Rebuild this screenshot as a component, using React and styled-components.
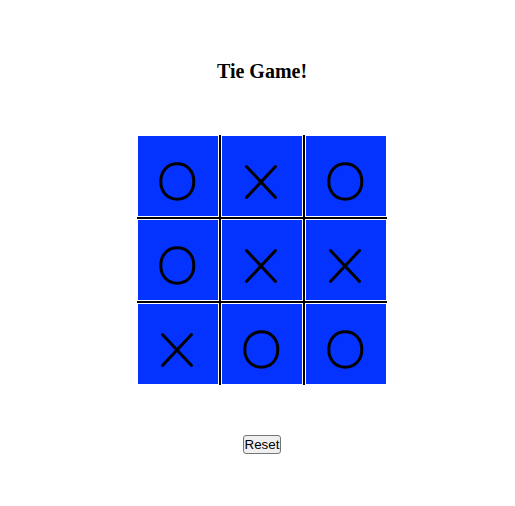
import React from "react";
import styled, { createGlobalStyle } from "styled-components";

const GlobalStyle = createGlobalStyle`
  body {
    margin: 0;
    background: #ffffff;
  }
`

const Page = styled.div`
  display: flex;
  flex-direction: column;
  align-items: center;
  padding-left: 9px;
`
const Title = styled.h1`
  margin: 60px 0 0;
  font-family: "Liberation Serif", "Times New Roman", serif;
  font-size: 20px;
  line-height: 23px;
  font-weight: bold;
  color: #000000;
`
const Board = styled.div`
  display: grid;
  grid-template-columns: repeat(3, 82px);
  grid-template-rows: repeat(3, 82px);
  gap: 2px;
  margin-top: 52px;
  background: #000000;
`
const Cell = styled.div`
  display: flex;
  border: 1px solid #ffffff;
  background: #0433ff;
`
const ResetButton = styled.button`
  margin-top: 50px;
  padding: 1px 1px;
  height: 19px;
  font-family: "Liberation Sans", Arial, sans-serif;
  font-size: 13.33px;
  line-height: 15px;
  color: #000000;
  background: #efefef;
  border: 1px solid #767676;
  border-radius: 3px;
`

// O drawn slightly squarer than an ellipse, like a thin sans "O"
const oPath =
  "M39.3 27.8 C49 27.8 55.8 35 55.8 45.5 C55.8 56 49 63.2 39.3 63.2 " +
  "C29.6 63.2 22.8 56 22.8 45.5 C22.8 35 29.6 27.8 39.3 27.8 Z";

const Mark = ({ value }) => (
  <svg width="80" height="80" viewBox="0 0 80 80">
    {value === "O" ? (
      <path d={oPath} fill="none" stroke="#000" strokeWidth="3" />
    ) : (
      <g stroke="#000" strokeWidth="3" strokeLinecap="round">
        <line x1="24.5" y1="30.5" x2="53.5" y2="61.5" />
        <line x1="53.5" y1="30.5" x2="24.5" y2="61.5" />
      </g>
    )}
  </svg>
)

const board = ["O", "X", "O", "O", "X", "X", "X", "O", "O"];

const App = () => {
  return (
    <Page>
      <GlobalStyle />
      <Title>Tie Game!</Title>
      <Board>
        {board.map((v, i) => (
          <Cell key={i}>
            <Mark value={v} />
          </Cell>
        ))}
      </Board>
      <ResetButton>Reset</ResetButton>
    </Page>
  );
};

export default App;
